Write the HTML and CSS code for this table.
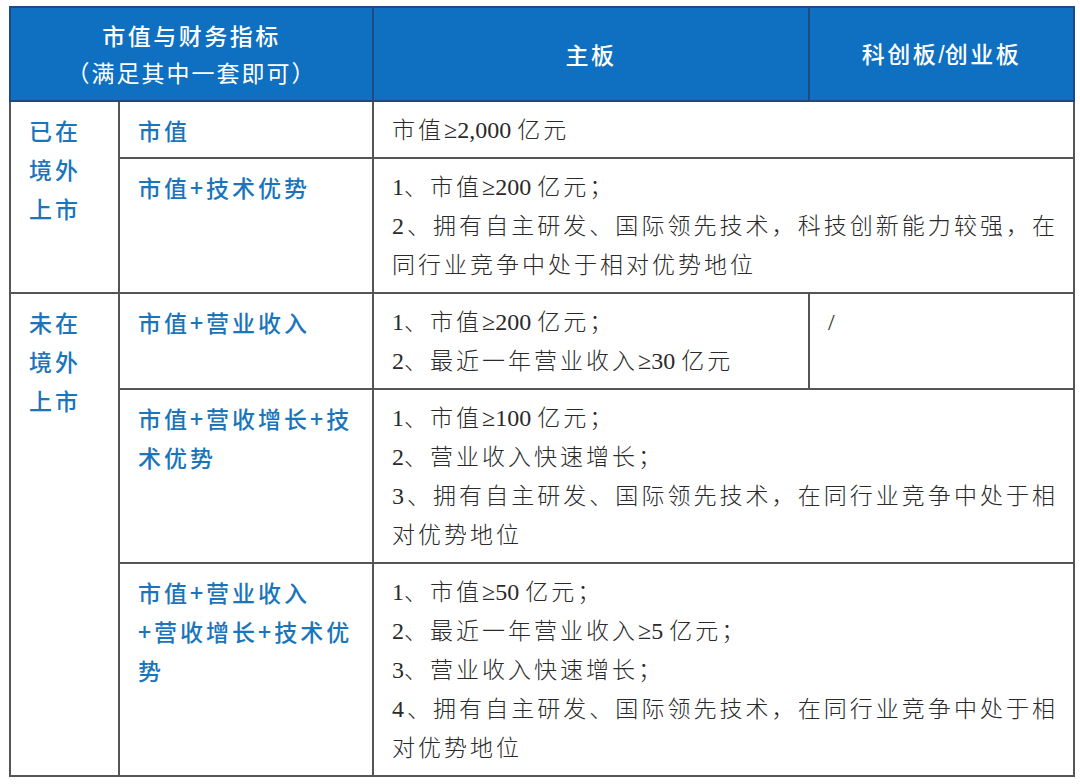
FILE: index.html
```html
<!DOCTYPE html>
<html lang="zh-CN">
<head>
<meta charset="utf-8">
<link rel="stylesheet" href="styles.css">
</head>
<body>
<div class="wrap">
<table class="grid">
  <colgroup>
    <col class="c1"><col class="c2"><col class="c3"><col class="c4">
  </colgroup>
  <thead>
    <tr class="head">
      <th colspan="2"><div class="h1">市值与财务指标</div><div class="h2">（满足其中一套即可）</div></th>
      <th><div class="h1">主板</div></th>
      <th><div class="h1">科创板<span class="sl">/</span>创业板</div></th>
    </tr>
  </thead>
  <tbody>
    <tr>
      <td rowspan="2" class="cat"><div>已在</div><div>境外</div><div>上市</div></td>
      <td class="lab"><div>市值</div></td>
      <td colspan="2" class="txt"><div>市值<span class="n">≥2,000 </span>亿元</div></td>
    </tr>
    <tr>
      <td class="lab"><div>市值+技术优势</div></td>
      <td colspan="2" class="txt">
        <div><span class="n">1</span>、市值<span class="n">≥200 </span>亿元；</div>
        <div class="full"><span class="n">2</span>、拥有自主研发、国际领先技术，科技创新能力较强，在</div>
        <div>同行业竞争中处于相对优势地位</div>
      </td>
    </tr>
    <tr>
      <td rowspan="3" class="cat"><div>未在</div><div>境外</div><div>上市</div></td>
      <td class="lab"><div>市值+营业收入</div></td>
      <td class="txt">
        <div><span class="n">1</span>、市值<span class="n">≥200 </span>亿元；</div>
        <div><span class="n">2</span>、最近一年营业收入<span class="n">≥30 </span>亿元</div>
      </td>
      <td class="txt"><div><span class="n">/</span></div></td>
    </tr>
    <tr>
      <td class="lab"><div>市值+营收增长+技</div><div>术优势</div></td>
      <td colspan="2" class="txt">
        <div><span class="n">1</span>、市值<span class="n">≥100 </span>亿元；</div>
        <div><span class="n">2</span>、营业收入快速增长；</div>
        <div class="full"><span class="n">3</span>、拥有自主研发、国际领先技术，在同行业竞争中处于相</div>
        <div>对优势地位</div>
      </td>
    </tr>
    <tr>
      <td class="lab"><div>市值+营业收入</div><div>+营收增长+技术优</div><div>势</div></td>
      <td colspan="2" class="txt">
        <div><span class="n">1</span>、市值<span class="n">≥50 </span>亿元；</div>
        <div><span class="n">2</span>、最近一年营业收入<span class="n">≥5 </span>亿元；</div>
        <div><span class="n">3</span>、营业收入快速增长；</div>
        <div class="full"><span class="n">4</span>、拥有自主研发、国际领先技术，在同行业竞争中处于相</div>
        <div>对优势地位</div>
      </td>
    </tr>
  </tbody>
</table>
</div>
</body>
</html>
```

FILE: styles.css
```css
html, body {
  margin: 0;
  padding: 0;
  background: #ffffff;
}
.wrap {
  padding: 6px 0 0 9px;
}
.grid {
  border-collapse: collapse;
  table-layout: fixed;
  width: 1064px;
}
.c1 { width: 109px; }
.c2 { width: 254px; }
.c3 { width: 436px; }
.c4 { width: 265px; }

.head th {
  background: #0f6fc0;
  color: #ffffff;
  height: 92px;
  border: 2px solid #1d4a82;
  text-align: center;
  vertical-align: middle;
  font-family: "Noto Sans CJK SC", "Noto Sans", sans-serif;
  font-weight: 500;
  padding: 0;
}
.h1 {
  font-size: 23px;
  line-height: 37px;
  letter-spacing: 2.5px;
}
.h1 .sl {
  letter-spacing: 0;
  font-family: "Liberation Sans", sans-serif;
}
.h2 {
  font-size: 23px;
  line-height: 37px;
  letter-spacing: 2px;
  font-weight: 400;
}

td {
  border: 2px solid #555555;
  vertical-align: top;
  padding: 9px 16px 7px 18px;
}
.cat, .lab {
  color: #1b75bb;
  font-family: "Noto Sans CJK SC", "Noto Sans", sans-serif;
  font-weight: 500;
  font-size: 23px;
  line-height: 39px;
  letter-spacing: 3px;
}
.txt {
  color: #2a2a2a;
  font-family: "Liberation Serif", "Noto Sans CJK SC", serif;
  font-weight: 300;
  font-size: 23px;
  line-height: 39px;
  letter-spacing: 3px;
  padding-right: 18px;
}
.txt .n {
  font-family: "Liberation Serif", serif;
  font-weight: 400;
  letter-spacing: 0;
  font-size: 24px;
}
.full {
  text-align: justify;
  text-align-last: justify;
  letter-spacing: 0;
}
```
